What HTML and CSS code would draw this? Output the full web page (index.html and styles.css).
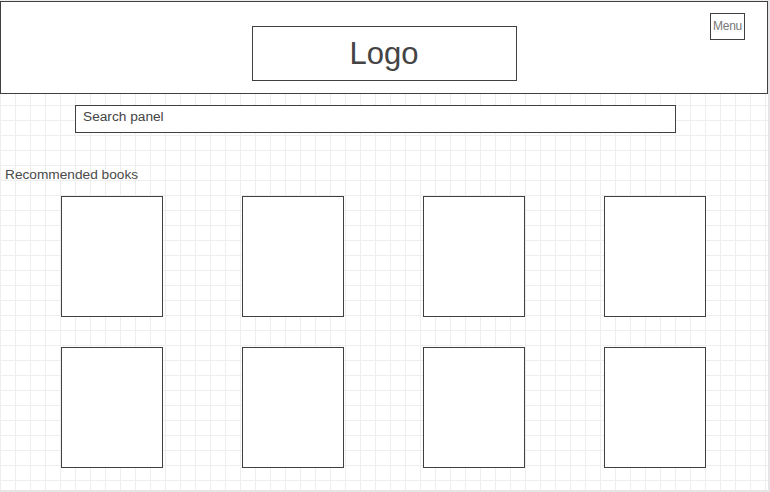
FILE: index.html
```html
<!DOCTYPE html>
<html lang="en">
<head>
  <meta charset="UTF-8">
  <meta name="viewport" content="width=device-width, initial-scale=1.0">
  <title>Book store wireframe</title>
  <link rel="stylesheet" href="styles.css">
</head>
<body>

  <div class="canvas">
    <header class="top">
      <div class="spacer"></div>
      <div class="logo">Logo</div>
      <div class="menu">Menu</div>
    </header>

    <div class="search">Search panel</div>

    <div class="section-title">Recommended books</div>

    <div class="books">
      <div class="book"></div>
      <div class="book"></div>
      <div class="book"></div>
      <div class="book"></div>
      <div class="book"></div>
      <div class="book"></div>
      <div class="book"></div>
      <div class="book"></div>
    </div>
  </div>

</body>
</html>
```

FILE: styles.css
```css
html {
  background: #e6e6e6;
}
body {
  margin: 0;
  font-family: 'Liberation Sans', Arial, sans-serif;
  color: #3c3c3c;
}
.canvas {
  width: 768px;
  height: 490px;
  background-color: #fff;
  background-image:
    linear-gradient(to right, #eeeeee 1px, transparent 1px),
    linear-gradient(to bottom, #eeeeee 1px, transparent 1px);
  background-size: 15px 15px;
  overflow: hidden;
}
.top {
  box-sizing: border-box;
  margin-top: 1px;
  height: 93px;
  border: 1px solid #404040;
  background: #fff;
  display: grid;
  grid-template-columns: 1fr 265px 1fr;
  align-items: start;
}
.logo {
  box-sizing: border-box;
  margin-top: 24px;
  height: 55px;
  border: 1px solid #404040;
  font-size: 31px;
  line-height: 53px;
  text-align: center;
  color: #444;
}
.menu {
  box-sizing: border-box;
  justify-self: end;
  margin-top: 11px;
  margin-right: 22px;
  width: 35px;
  height: 27px;
  border: 1px solid #404040;
  font-size: 12px;
  line-height: 25px;
  text-align: center;
  color: #777;
  letter-spacing: -0.3px;
}
.search {
  box-sizing: border-box;
  margin: 11px 0 0 75px;
  width: 601px;
  height: 28px;
  border: 1px solid #404040;
  background: #fff;
  padding: 3px 0 0 7px;
  font-size: 13.7px;
  line-height: 16px;
  color: #444;
}
.section-title {
  margin: 34px 0 0 5px;
  font-size: 13.7px;
  line-height: 16px;
  color: #4a4a4a;
}
.books {
  margin: 13px 0 0 61px;
  width: 645px;
  display: grid;
  grid-template-columns: repeat(4, 102px);
  justify-content: space-between;
  row-gap: 30px;
}
.book {
  box-sizing: border-box;
  height: 121px;
  border: 1px solid #404040;
  background: #fff;
}
```
